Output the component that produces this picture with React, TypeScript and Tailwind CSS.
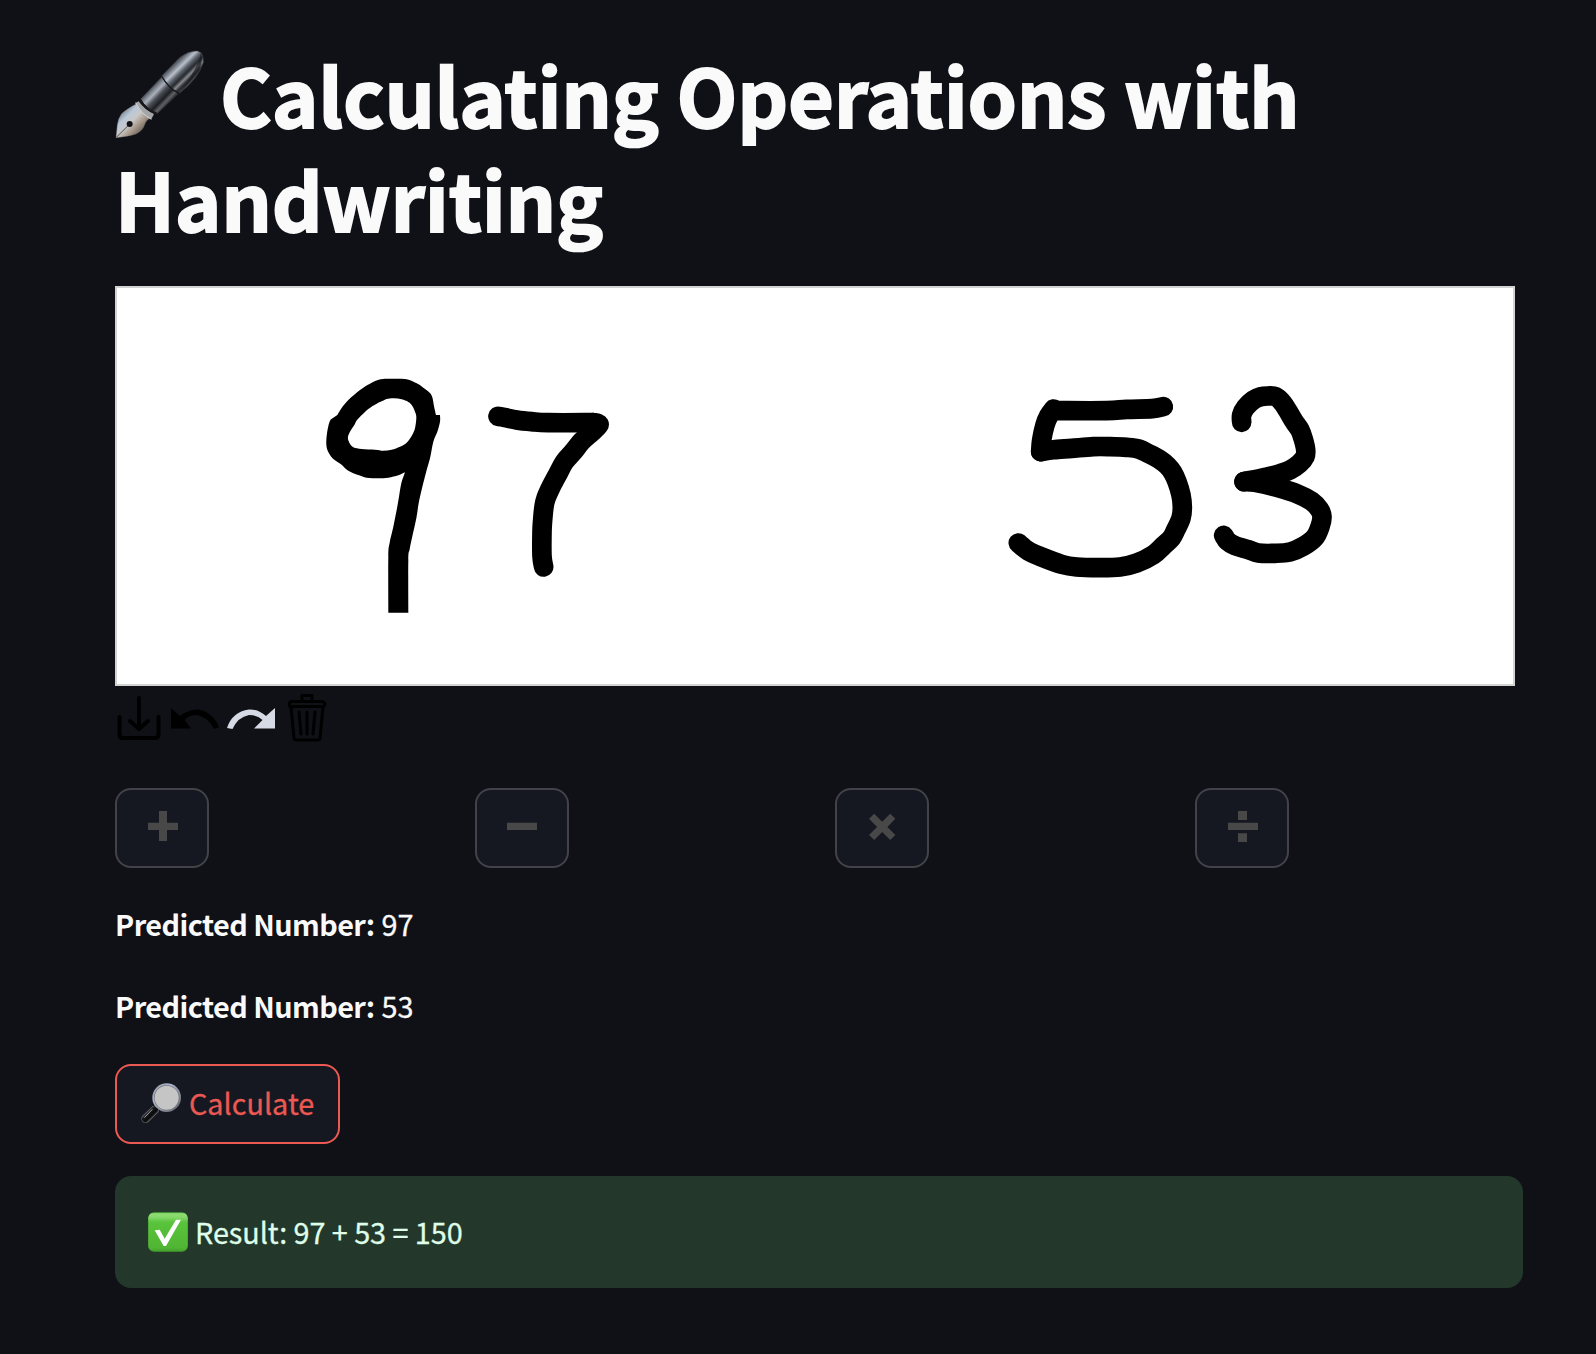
import type { ReactNode } from "react";

type Point = [number, number];

/** Smooth curve through every point of a pen stroke. */
function curve(points: Point[]) {
  let d = `M${points[0][0]} ${points[0][1]}`;
  for (let i = 0; i < points.length - 1; i++) {
    const a = points[Math.max(i - 1, 0)];
    const b = points[i];
    const c = points[i + 1];
    const e = points[Math.min(i + 2, points.length - 1)];
    d += `C${b[0] + (c[0] - a[0]) / 6} ${b[1] + (c[1] - a[1]) / 6} ${c[0] - (e[0] - b[0]) / 6} ${c[1] - (e[1] - b[1]) / 6} ${c[0]} ${c[1]}`;
  }
  return d;
}

const nineOuter: Point[] = [
  [112, 165], [125, 144], [145, 120], [180, 90], [210, 71], [242, 58], [280, 56], [320, 58], [350, 70], [370, 83], [389, 98], [397, 112], [402, 138], [408, 165],
];
const nineStem: Point[] = [
  [420, 165], [420, 185], [412, 215], [400, 245], [390, 295], [380, 330], [366, 385], [356, 430], [349, 475], [339, 520], [329, 568], [325, 600], [325, 758],
];
const nineStemLeft: Point[] = [[265, 758], [265, 590], [269, 548], [279, 505], [290, 450], [297, 410], [304, 370], [315, 337]];
const nineBowl: Point[] = [
  [315, 337], [295, 346], [265, 353], [235, 355], [200, 353], [175, 345], [145, 332], [122, 312], [100, 297], [86, 278], [80, 262], [79, 240], [83, 208], [90, 182], [100, 173], [112, 165],
];
const nineHole: Point[] = [
  [260, 117], [282, 115], [305, 118], [325, 126], [337, 138], [345, 155], [349, 172], [345, 205], [335, 228], [320, 248], [300, 260], [275, 269], [250, 272], [225, 269], [185, 267], [160, 262], [147, 246], [144, 230], [153, 210], [163, 195], [173, 178], [205, 147], [230, 131], [260, 117],
];

const joined = (points: Point[]) => curve(points).replace("M", "L");

function PenIcon() {
  return (
    <svg className="h-[110px] w-[110px]" viewBox="0 0 330 330" aria-hidden="true">
      <defs>
        <linearGradient id="cap" gradientUnits="userSpaceOnUse" x1="185" y1="72" x2="242" y2="130">
          <stop offset="0" stopColor="#343a42" />
          <stop offset="0.14" stopColor="#6d747d" />
          <stop offset="0.3" stopColor="#b9c0cb" />
          <stop offset="0.45" stopColor="#5e656e" />
          <stop offset="0.62" stopColor="#25282d" />
          <stop offset="0.74" stopColor="#85888d" />
          <stop offset="0.86" stopColor="#25272b" />
          <stop offset="1" stopColor="#4a4d52" />
        </linearGradient>
        <linearGradient id="barrel" gradientUnits="userSpaceOnUse" x1="122" y1="140" x2="176" y2="192">
          <stop offset="0" stopColor="#2c3036" />
          <stop offset="0.15" stopColor="#777d86" />
          <stop offset="0.3" stopColor="#aab0ba" />
          <stop offset="0.48" stopColor="#4b4f56" />
          <stop offset="0.7" stopColor="#1d1e21" />
          <stop offset="0.85" stopColor="#606266" />
          <stop offset="1" stopColor="#222326" />
        </linearGradient>
        <linearGradient id="nib" gradientUnits="userSpaceOnUse" x1="36" y1="214" x2="96" y2="274">
          <stop offset="0" stopColor="#7d8590" />
          <stop offset="0.25" stopColor="#b9c8d8" />
          <stop offset="0.5" stopColor="#c9c8c6" />
          <stop offset="0.75" stopColor="#a39687" />
          <stop offset="1" stopColor="#6e6259" />
        </linearGradient>
      </defs>
      <path d="M155 108 L210 52 Q238 32 262 33 Q282 38 280 68 Q266 114 208 160 Q176 146 155 108Z" fill="url(#cap)" stroke="#44484e" strokeWidth="1.5" />
      <path d="M272 40 Q281 60 268 86 Q252 115 209 157 Q238 116 252 92 Q268 66 272 40Z" fill="#1c1e22" opacity="0.7" />
      <path d="M155 110 L92 176 Q110 208 142 221 L206 162 Q176 146 155 110Z" fill="url(#barrel)" />
      <path d="M155 108 Q174 144 208 160" fill="none" stroke="#17181b" strokeWidth="4" />
      <path d="M90 178 Q106 208 140 220" fill="none" stroke="#17181b" strokeWidth="5" />
      <path d="M82 190 Q48 208 34 222 Q24 236 22 254 L18 293 Q55 290 78 282 Q98 272 104 254 Q107 242 120 234 Q94 216 82 190Z" fill="url(#nib)" stroke="#77726d" strokeWidth="1" />
      <path d="M86 184 L76 189 Q94 224 124 238 L132 222 Q104 210 86 184Z" fill="#a3a5a7" />
      <path d="M77 188 Q94 222 124 238" fill="none" stroke="#d3d6d9" strokeWidth="3" />
      <path d="M59 252 L19 292" stroke="#3d3a38" strokeWidth="2.5" />
      <circle cx="59" cy="252" r="9" fill="#111216" />
    </svg>
  );
}

function MagnifierIcon() {
  return (
    <svg className="h-10 w-10" viewBox="126 98 120 120" aria-hidden="true">
      <defs>
        <linearGradient id="rim" x1="0" y1="0" x2="1" y2="1">
          <stop offset="0" stopColor="#8c9099" />
          <stop offset="0.35" stopColor="#aeb8d0" />
          <stop offset="1" stopColor="#5c5c5e" />
        </linearGradient>
        <linearGradient id="grip" gradientUnits="userSpaceOnUse" x1="145" y1="180" x2="165" y2="200">
          <stop offset="0" stopColor="#55585c" />
          <stop offset="0.3" stopColor="#16181b" />
          <stop offset="0.7" stopColor="#08090a" />
          <stop offset="1" stopColor="#55585c" />
        </linearGradient>
      </defs>
      <path d="M180 165 L167 178" stroke="#8b8b8e" strokeWidth="14" />
      <path d="M167 179 L140 205" stroke="#66686c" strokeWidth="26" strokeLinecap="round" />
      <path d="M167 179 L140 205" stroke="url(#grip)" strokeWidth="22" strokeLinecap="round" />
      <path d="M159 178 L137 201" stroke="#a4a6a8" strokeWidth="3" strokeLinecap="round" />
      <circle cx="203" cy="142" r="43" fill="url(#rim)" />
      <circle cx="203" cy="142" r="38" fill="#77797f" />
      <circle cx="203" cy="142" r="36" fill="#c5c5c6" />
    </svg>
  );
}

function CheckIcon() {
  return (
    <svg className="h-10 w-10" viewBox="144 486 120 120" aria-hidden="true">
      <defs>
        <linearGradient id="green" x1="0" y1="0" x2="0" y2="1">
          <stop offset="0" stopColor="#3f9f2c" />
          <stop offset="0.04" stopColor="#8fdc73" />
          <stop offset="0.13" stopColor="#84d769" />
          <stop offset="0.25" stopColor="#5ac43c" />
          <stop offset="0.9" stopColor="#50b533" />
          <stop offset="1" stopColor="#429d2a" />
        </linearGradient>
      </defs>
      <rect x="144.5" y="486.5" width="119" height="119" rx="18" fill="url(#green)" />
      <path d="M164 541 L179 539 L194 566 L228 509 L243 509 L198 588 L191 588Z" fill="#fff" />
    </svg>
  );
}

function Drawing() {
  return (
    <svg className="block h-full w-full" viewBox="117 288 1396 396" role="img" aria-label="97 53">
      <g transform="translate(300 360) scale(.33333)">
        <path
          fillRule="evenodd"
          d={`${curve(nineOuter)}${joined(nineStem)}${joined(nineStemLeft)}${joined(nineBowl)}Z${curve(nineHole)}Z`}
        />
        <g fill="none" stroke="#000" strokeWidth="59" strokeLinecap="round" strokeLinejoin="round">
          <path d={curve([[594, 169], [612, 172], [650, 180], [695, 185], [745, 188], [880, 188]])} />
          <path d={curve([[880, 188], [893, 190], [896, 196], [875, 217], [845, 244], [820, 275], [793, 306], [773, 343], [752, 383], [738, 415], [732, 440], [728, 480], [726, 515], [726, 588], [731, 621]])} />
        </g>
      </g>
      <g transform="translate(990 370) scale(.33333)" fill="none" stroke="#000" strokeWidth="59" strokeLinecap="round" strokeLinejoin="round">
        <path d={curve([[520, 110], [487, 116], [410, 118], [350, 122], [200, 122]])} />
        <path d={curve([[191, 117], [176, 138], [165, 165], [155, 210], [152, 245]])} />
        <path d={curve([[152, 245], [190, 239], [245, 235], [310, 230], [360, 230], [410, 232], [446, 237], [480, 253], [512, 271], [532, 287], [548, 307], [561, 335], [573, 375], [577, 412], [573, 445], [558, 478], [545, 503], [520, 527], [490, 554], [440, 579], [390, 591], [325, 593], [260, 591], [215, 583], [155, 561], [115, 543], [85, 519]])} />
        <path d={curve([[755, 157], [755, 135], [767, 112], [790, 90], [812, 80], [833, 78], [857, 80], [878, 99], [895, 125], [912, 154], [930, 180], [940, 208], [947, 239], [945, 260], [928, 281], [900, 300], [870, 311], [830, 321], [762, 335]])} />
        <path d={curve([[762, 335], [795, 337], [860, 352], [925, 373], [965, 394], [988, 418], [996, 440], [990, 470], [974, 503], [940, 529], [900, 546], [855, 550], [805, 549], [775, 539], [735, 527], [713, 514], [701, 496]])} />
      </g>
    </svg>
  );
}

function Toolbar() {
  return (
    <div className="mt-2 flex h-12 gap-2">
      <svg className="h-12 w-12" viewBox="0 0 48 48" fill="none" stroke="#000" strokeWidth="4" strokeLinecap="round" strokeLinejoin="round">
        <path d="M4.500 23 V40 Q4.500 44 8 44 H40 Q43.500 44 43.500 40 V23" />
        <path d="M24 4 V35 M15 27 L24 35 L33 27" />
      </svg>
      <svg className="h-12 w-12" viewBox="0 0 48 48">
        <path d="M0 14 L9 22 Q18 15 27 15.500 Q42 18 48 33 L43 35 Q37 23 26 21 Q18 21 13.500 26 L20 34.500 H0Z" fill="#000" />
      </svg>
      <svg className="h-12 w-12" viewBox="0 0 48 48">
        <path d="M48 14 L39 22 Q31 15 22 15.500 Q5 18 0 34 L5.500 35 Q11 23 22 21 Q31 21 35.500 26 L27 34.500 H48Z" fill="#d5dae5" />
      </svg>
      <svg className="h-12 w-12" viewBox="0 0 48 48" fill="none" stroke="#000" strokeWidth="3" strokeLinecap="round" strokeLinejoin="round">
        <path d="M19 6 V1.500 H29 V6 M8 7.500 H40 Q43 9 41 12.500 H7 Q5 9 8 7.500Z" />
        <path d="M8 13 L11 44 Q11 46 14 46 H34 Q37 46 37 44 L40 13 M16 18 L18 40 M24 18 V40 M32 18 L30 40" />
      </svg>
    </div>
  );
}

function OperatorButton({ label, children }: { label: string; children: ReactNode }) {
  return (
    <button aria-label={label} className="h-20 w-[94px] rounded-2xl border-2 border-[#42434a] bg-[#151820]">
      <svg className="block h-[76px] w-[90px]" viewBox="2 2 90 76" fill="#484848">
        {children}
      </svg>
    </button>
  );
}

function Prediction({ value }: { value: number }) {
  return (
    <p className="flex h-[50px] items-center gap-[7px] pb-[2px] whitespace-nowrap">
      <strong className="font-bold tracking-[-0.55px]">Predicted Number:</strong>
      <span className="[-webkit-text-stroke:0.3px]">{value}</span>
    </p>
  );
}

export default function App() {
  return (
    <main
      className="min-h-[1354px] bg-[#101116] pl-[115px] text-[28.8px] leading-[50px] text-[#fafafa]"
      style={{ fontFamily: '"Noto Sans CJK SC", "Noto Sans", sans-serif' }}
    >
      <div className="flex w-[1408px] flex-col">
        <h1 className="h-[286px] pt-[42px] text-[79.2px] leading-[104px] font-bold tracking-[-0.25px] [-webkit-text-stroke:1.8px]">
          <span className="flex h-[104px] items-center">
            <span className="mt-[2px] -ml-[5px] flex w-[110px] shrink-0">
              <PenIcon />
            </span>
            <span className="whitespace-nowrap">Calculating Operations with</span>
          </span>
          <span className="block">Handwriting</span>
        </h1>

        <div className="h-[400px] w-[1400px] border-2 border-[#d3d3d3] bg-white">
          <Drawing />
        </div>
        <Toolbar />

        <div className="mt-[46px] grid grid-cols-4 gap-8">
          <OperatorButton label="Add">
            <path d="M44 23h8v11.700h11V42H52v11h-8V42H33v-7.300h11z" />
          </OperatorButton>
          <OperatorButton label="Subtract">
            <path d="M32 34.700h30V42H32z" />
          </OperatorButton>
          <OperatorButton label="Multiply">
            <path d="M39.200 25.700 L47.200 33.700 L55.200 25.700 L60.400 30.800 L52.400 38.900 L60.400 47 L55.200 52.100 L47.200 44 L39.200 52.100 L34 47 L42.100 38.900 L34 30.800Z" />
          </OperatorButton>
          <OperatorButton label="Divide">
            <path d="M33 34.700h30V42H33z M43 23h9v9h-9z M43 45.300h9V54h-9z" />
          </OperatorButton>
        </div>

        <div className="mt-8 flex flex-col gap-8">
          <Prediction value={97} />
          <Prediction value={53} />
        </div>

        <button className="mt-8 flex h-20 w-[225px] items-center rounded-2xl border-2 border-[#ec5953] bg-[#151820] pl-[24px] text-[#ec5953] [-webkit-text-stroke:0.3px]">
          <span className="-mt-[3px] mr-[8px] shrink-0">
            <MagnifierIcon />
          </span>
          <span className="pb-[2px]">Calculate</span>
        </button>

        <div className="mt-8 flex h-28 items-center rounded-2xl bg-[#23382b] pl-[33px] text-[#dffde9] [-webkit-text-stroke:0.3px]">
          <CheckIcon />
          <span className="ml-[7px] tracking-[-0.04px] whitespace-nowrap">Result: 97 + 53 = 150</span>
        </div>
      </div>
    </main>
  );
}
